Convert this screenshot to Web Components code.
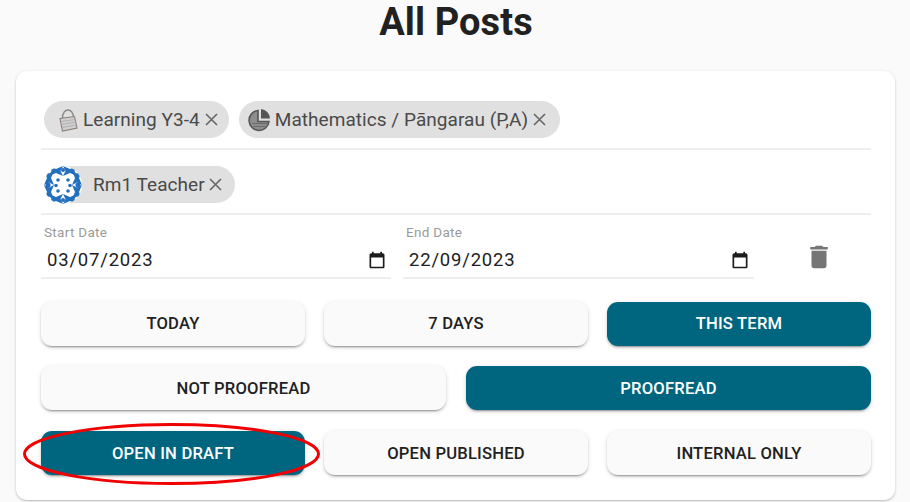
<!DOCTYPE html>
<html><head><meta charset="utf-8">
<style>
html,body{margin:0;padding:0;height:502px;overflow:hidden;background:#fafafa;font-family:Roboto,sans-serif}
</style></head><body>
<template id="t-chip"><style>
:host{display:inline-flex;align-items:center;height:37px;border-radius:19px;background:#e0e0e0;color:#4a4a4a;font-size:19px;letter-spacing:.05px;white-space:nowrap;padding-right:14px;box-sizing:border-box}
.i{display:flex;align-items:center;justify-content:center}
svg.x{width:13px;height:13px;margin-left:var(--x-gap,5px);display:block}
</style><span class="i"><slot name="icon"></slot></span><slot></slot><svg class="x" viewBox="0 0 13 13"><path d="M1 1L12 12M12 1L1 12" stroke="#666" stroke-width="1.600" fill="none"/></svg></template>

<template id="t-row"><style>
:host{display:flex;gap:10px;border-bottom:2px solid #eeeeee;padding:0 3px;box-sizing:border-box}
</style><slot></slot></template>

<template id="t-date"><style>
:host{display:block;box-sizing:border-box}
.l{font-size:13.500px;line-height:15px;color:#9a9a9a;letter-spacing:.3px;padding-left:3px}
.v{display:flex;align-items:center;justify-content:space-between;height:34px;border-bottom:2px solid #eeeeee;padding:0 4px 0 6px;font-size:18.500px;letter-spacing:.8px;color:#212121;margin-top:3px;box-sizing:content-box}
svg{width:20px;height:20px;display:block}
</style><div class="l"><slot name="label"></slot></div><div class="v"><slot></slot><svg viewBox="0 0 24 24"><path fill="#1c1c1c" d="M19 4h-1V2h-2v2H8V2H6v2H5C3.900 4 3 4.900 3 6v14c0 1.100.9 2 2 2h14c1.100 0 2-.9 2-2V6c0-1.100-.9-2-2-2zm0 16H5V9h14v11z"/></svg></div></template>

<template id="t-btn"><style>
:host{display:flex;flex:1 1 0;align-items:center;justify-content:center;height:44px;padding-bottom:var(--pb,2px);border-radius:11px;background:#fafafa;color:#212121;font-size:16.600px;font-weight:500;letter-spacing:.2px;text-transform:uppercase;box-shadow:0 3px 1px -2px rgba(0,0,0,.2),0 2px 2px 0 rgba(0,0,0,.14),0 1px 5px 0 rgba(0,0,0,.12);box-sizing:border-box}
:host([on]){background:#006680;color:#fff}
</style><slot></slot></template>

<template id="t-btns"><style>
:host{display:flex;gap:19px}
</style><slot></slot></template>

<template id="t-card"><style>
:host{display:block;position:relative;margin:0 15px 0 16px;height:429px;background:#fff;border-radius:11px;box-shadow:0 1px 3px rgba(0,0,0,.2),0 1px 1px rgba(0,0,0,.08);padding:30px 24px 0 25px;box-sizing:border-box}
</style><slot></slot></template>

<template id="t-page"><style>
:host{display:block;position:relative;width:910px;height:502px}
h1{margin:0;height:71px;box-sizing:border-box;padding-left:2px;font-size:38px;line-height:44px;font-weight:700;color:#212121;text-align:center;letter-spacing:.1px}
.mark{position:absolute;left:23px;top:423px;width:297px;height:62px;pointer-events:none}
</style><h1><slot name="title"></slot></h1><slot></slot><svg class="mark" viewBox="0 0 297 62"><ellipse cx="148.500" cy="31" rx="147" ry="29.500" fill="none" stroke="#f00000" stroke-width="3"/></svg></template>

<script>
function def(n,t){customElements.define(n,class extends HTMLElement{constructor(){super();this.attachShadow({mode:'open'}).appendChild(document.getElementById(t).content.cloneNode(true))}})}
def('x-chip','t-chip');def('x-row','t-row');def('x-date','t-date');def('x-btn','t-btn');def('x-btns','t-btns');def('x-card','t-card');def('x-page','t-page');
</script>

<x-page>
<span slot="title">All Posts</span>
<x-card>
<x-row style="height:49px">
<x-chip style="padding-right:11px"><svg slot="icon" width="24" height="24" viewBox="0 0 24 24" style="display:block;margin:0 3px 0 12px"><path d="M6.500 10C6.500 5 9 2 12 2s5.500 3 5.500 8" fill="none" stroke="#8a8a8a" stroke-width="1.500"/><path d="M4 10.500L18.500 8.500 21 20 6.500 23z" fill="#d0d0d0" stroke="#8c7f78" stroke-width="1.100"/><path d="M5 13.500l14-2M5.500 16.500l14.500-2.500M6 19.500l14-2.500" stroke="#a8a8a8" stroke-width=".8"/></svg>Learning Y3-4</x-chip>
<x-chip><svg slot="icon" width="25" height="25" viewBox="0 0 25 25" style="display:block;margin:0 3px 0 8px"><path d="M11 3.500A10 10 0 1 0 22 14.500H11z" fill="#8d8d8d" stroke="#555" stroke-width="1.600"/><path d="M14 2A10 10 0 0 1 23 11.500H14z" fill="#555"/><path d="M5 16.500h15M6.500 19.500h12" stroke="#6b6b6b"/></svg>Mathematics / Pāngarau (P,A)</x-chip>
</x-row>
<x-row style="height:65px;padding-top:16px">
<x-chip style="--x-gap:4px;padding-right:13px"><svg slot="icon" width="38" height="38" viewBox="0 0 38 38" style="display:block;margin-right:11px"><defs><clipPath id="av"><circle cx="19" cy="19" r="19"/></clipPath><g id="bw"><path d="M-7-5L0-2 7-5 4.500 0 7 5 0 2-7 5-4.500 0z"/></g></defs><circle cx="19" cy="19" r="19" fill="#fff"/><g clip-path="url(#av)" fill="#2470bd"><use href="#bw" x="12" y="5"/><use href="#bw" x="26" y="5"/><use href="#bw" x="12" y="33"/><use href="#bw" x="26" y="33"/><use href="#bw" transform="translate(5 12) rotate(90)"/><use href="#bw" transform="translate(5 26) rotate(90)"/><use href="#bw" transform="translate(33 12) rotate(90)"/><use href="#bw" transform="translate(33 26) rotate(90)"/><circle cx="19" cy="4" r="2"/><circle cx="19" cy="34" r="2"/><circle cx="4" cy="19" r="2.500"/><circle cx="34" cy="19" r="2.500"/><circle cx="14" cy="14" r="1.800"/><circle cx="24" cy="14" r="1.800"/><circle cx="12" cy="19.500" r="1.800"/><circle cx="26" cy="19.500" r="1.800"/><circle cx="14" cy="25" r="1.800"/><circle cx="24" cy="25" r="1.800"/></g></svg>Rm1 Teacher</x-chip>
</x-row>
<div style="display:flex;height:87px;padding-top:10px;box-sizing:border-box">
<x-date style="width:350px"><span slot="label">Start Date</span>03/07/2023</x-date>
<x-date style="width:351px;margin-left:12px"><span slot="label">End Date</span>22/09/2023</x-date>
<svg width="30" height="30" viewBox="0 0 24 24" style="display:block;margin:17px 0 0 50px"><path fill="#757575" d="M6 19c0 1.100.9 2 2 2h8c1.100 0 2-.9 2-2V7H6v12zM19 4h-3.500l-1-1h-5l-1 1H5v2h14V4z"/></svg>
</div>
<x-btns><x-btn>Today</x-btn><x-btn>7 Days</x-btn><x-btn on>This Term</x-btn></x-btns>
<x-btns style="margin-top:20px;gap:20px;--pb:0px"><x-btn>Not Proofread</x-btn><x-btn on>Proofread</x-btn></x-btns>
<x-btns style="margin-top:21px;--pb:0px"><x-btn on>Open in Draft</x-btn><x-btn>Open Published</x-btn><x-btn>Internal Only</x-btn></x-btns>
</x-card>
</x-page>
</body></html>
